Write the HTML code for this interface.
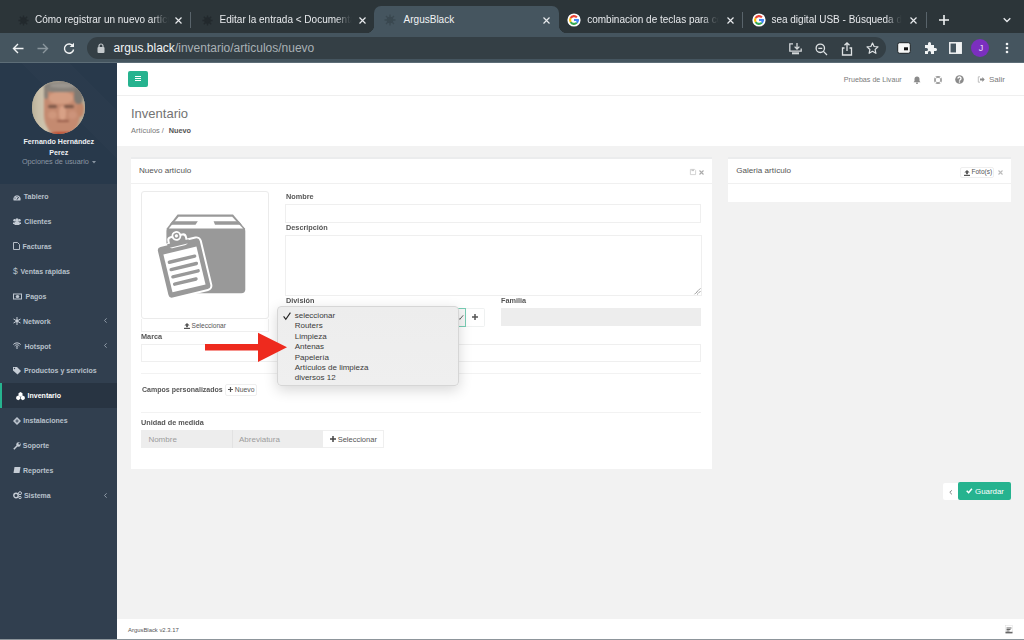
<!DOCTYPE html>
<html><head><meta charset="utf-8">
<style>
*{margin:0;padding:0;box-sizing:border-box}
html,body{width:1024px;height:640px;overflow:hidden;background:#f2f2f2;font-family:"Liberation Sans",sans-serif;position:relative}
.a{position:absolute}
.t{position:absolute;white-space:nowrap;line-height:1}
.b{font-weight:bold}
.lab .t{transform:scaleX(.936);transform-origin:0 0}
svg{position:absolute;overflow:visible}
</style></head><body>

<!-- ===== Chrome tab strip ===== -->
<div class="a" style="left:0;top:0;width:1024px;height:33px;background:#2c3539"></div>
<div class="a" style="left:374px;top:6px;width:185px;height:28px;background:#45555f;border-radius:7px 7px 0 0"></div>
<div class="a" style="left:366px;top:25px;width:8px;height:8px;background:radial-gradient(circle at 0 0,#2c3539 8px,#45555f 8.5px)"></div>
<div class="a" style="left:559px;top:25px;width:8px;height:8px;background:radial-gradient(circle at 100% 0,#2c3539 8px,#45555f 8.5px)"></div>
<!-- separators -->
<div class="a" style="left:190px;top:12px;width:1px;height:16px;background:#59646b"></div>
<div class="a" style="left:742px;top:12px;width:1px;height:16px;background:#59646b"></div>
<div class="a" style="left:926px;top:12px;width:1px;height:16px;background:#59646b"></div>
<!-- favicons (argus) -->
<svg style="left:17.5px;top:14.5px" width="11" height="11" viewBox="0 0 12 12"><g fill="#22292d"><circle cx="6" cy="6" r="3.5"/><path d="M6 0.5v11M0.5 6h11M2 2l8 8M10 2l-8 8" stroke="#22292d" stroke-width="1.5"/></g></svg>
<svg style="left:201.5px;top:14.5px" width="11" height="11" viewBox="0 0 12 12"><g fill="#22292d"><circle cx="6" cy="6" r="3.5"/><path d="M6 0.5v11M0.5 6h11M2 2l8 8M10 2l-8 8" stroke="#22292d" stroke-width="1.5"/></g></svg>
<svg style="left:384px;top:14px" width="12" height="12" viewBox="0 0 12 12"><g fill="#3a4850"><circle cx="6" cy="6" r="3.3"/><path d="M6 0.5v11M0.5 6h11M2 2l8 8M10 2l-8 8" stroke="#3a4850" stroke-width="1.3"/></g></svg>
<!-- google G -->
<svg style="left:567px;top:13px" width="14" height="14" viewBox="0 0 14 14"><circle cx="7" cy="7" r="6.6" fill="#fff"/><g fill="none" stroke-width="2.1"><path d="M10.900 7.000A3.9 3.9 0 0 1 9.758 9.758" stroke="#4285f4"/><path d="M9.758 9.758A3.9 3.9 0 0 1 3.623 8.950" stroke="#34a853"/><path d="M3.623 8.950A3.9 3.9 0 0 1 3.623 5.050" stroke="#fbbc05"/><path d="M3.623 5.050A3.9 3.9 0 0 1 9.898 4.390" stroke="#ea4335"/><path d="M7 7H11.9" stroke="#4285f4"/></g></svg>
<svg style="left:752px;top:13px" width="14" height="14" viewBox="0 0 14 14"><circle cx="7" cy="7" r="6.6" fill="#fff"/><g fill="none" stroke-width="2.1"><path d="M10.900 7.000A3.9 3.9 0 0 1 9.758 9.758" stroke="#4285f4"/><path d="M9.758 9.758A3.9 3.9 0 0 1 3.623 8.950" stroke="#34a853"/><path d="M3.623 8.950A3.9 3.9 0 0 1 3.623 5.050" stroke="#fbbc05"/><path d="M3.623 5.050A3.9 3.9 0 0 1 9.898 4.390" stroke="#ea4335"/><path d="M7 7H11.9" stroke="#4285f4"/></g></svg>
<!-- tab titles -->
<div class="t" style="left:35px;top:14.9px;font-size:10px;color:#e8eaed;width:134px;overflow:hidden;-webkit-mask-image:linear-gradient(90deg,#000 calc(100% - 16px),rgba(0,0,0,.25) calc(100% - 6px),transparent 100%)">Cómo registrar un nuevo artículo</div>
<div class="t" style="left:219.6px;top:14.9px;font-size:10px;color:#e8eaed;width:132px;overflow:hidden;-webkit-mask-image:linear-gradient(90deg,#000 calc(100% - 16px),rgba(0,0,0,.25) calc(100% - 6px),transparent 100%)">Editar la entrada &lt; Documentación</div>
<div class="t" style="left:403.6px;top:14.9px;font-size:10px;color:#f1f3f4">ArgusBlack</div>
<div class="t" style="left:587.2px;top:14.9px;font-size:10px;color:#e8eaed;width:132px;overflow:hidden;-webkit-mask-image:linear-gradient(90deg,#000 calc(100% - 16px),rgba(0,0,0,.25) calc(100% - 6px),transparent 100%)">combinacion de teclas para copiar</div>
<div class="t" style="left:771.4px;top:14.9px;font-size:10px;color:#e8eaed;width:131px;overflow:hidden;-webkit-mask-image:linear-gradient(90deg,#000 calc(100% - 16px),rgba(0,0,0,.25) calc(100% - 6px),transparent 100%)">sea digital USB - Búsqueda de Google</div>
<!-- close X -->
<svg style="left:175px;top:17px" width="7" height="7" viewBox="0 0 7 7"><path d="M0.5 .5l6 6M6.5 .5l-6 6" stroke="#e8eaed" stroke-width="1.2"/></svg>
<svg style="left:359px;top:17px" width="7" height="7" viewBox="0 0 7 7"><path d="M0.5 .5l6 6M6.5 .5l-6 6" stroke="#e8eaed" stroke-width="1.2"/></svg>
<svg style="left:543px;top:17px" width="7" height="7" viewBox="0 0 7 7"><path d="M0.5 .5l6 6M6.5 .5l-6 6" stroke="#e8eaed" stroke-width="1.2"/></svg>
<svg style="left:727px;top:17px" width="7" height="7" viewBox="0 0 7 7"><path d="M0.5 .5l6 6M6.5 .5l-6 6" stroke="#e8eaed" stroke-width="1.2"/></svg>
<svg style="left:910px;top:17px" width="7" height="7" viewBox="0 0 7 7"><path d="M0.5 .5l6 6M6.5 .5l-6 6" stroke="#e8eaed" stroke-width="1.2"/></svg>
<!-- new tab + -->
<svg style="left:939px;top:15px" width="10" height="10" viewBox="0 0 10 10"><path d="M5 0v10M0 5h10" stroke="#f1f3f4" stroke-width="1.6"/></svg>
<svg style="left:1003px;top:17px" width="8" height="6" viewBox="0 0 8 6"><path d="M.7 1.2L4 4.5 7.3 1.2" fill="none" stroke="#e8eaed" stroke-width="1.3"/></svg>

<!-- ===== toolbar ===== -->
<div class="a" style="left:0;top:33px;width:1024px;height:30px;background:#45555f"></div>
<div class="a" style="left:0;top:62px;width:1024px;height:1px;background:#5d6d77"></div>
<div class="a" style="left:87px;top:37px;width:799px;height:22px;background:#343f45;border-radius:11px"></div>
<!-- back / fwd / reload -->
<svg style="left:12px;top:42.5px" width="12" height="11" viewBox="0 0 12 11"><path d="M11.5 5.5H1.5M6 1L1.5 5.5 6 10" fill="none" stroke="#f1f3f4" stroke-width="1.4"/></svg>
<svg style="left:37px;top:42.5px" width="12" height="11" viewBox="0 0 12 11"><path d="M.5 5.5h10M6 1l4.5 4.5L6 10" fill="none" stroke="#8a969d" stroke-width="1.4"/></svg>
<svg style="left:63px;top:42px" width="12" height="12" viewBox="0 0 12 12"><path d="M10 4.2A4.6 4.6 0 1 0 10.6 7.5" fill="none" stroke="#f1f3f4" stroke-width="1.4"/><path d="M11 0.8v4.3H6.7z" fill="#f1f3f4"/></svg>
<!-- lock -->
<svg style="left:97px;top:43px" width="8" height="10" viewBox="0 0 8 10"><rect x="0.5" y="4" width="7" height="6" rx="1" fill="#c4c9cc"/><path d="M2 4.5V3a2 2 0 0 1 4 0v1.5" fill="none" stroke="#c4c9cc" stroke-width="1.2"/></svg>
<div class="t" style="left:113.5px;top:42.4px;font-size:12px;color:#f1f3f4">argus.black<span style="color:#a9b1b6">/inventario/articulos/nuevo</span></div>
<!-- omnibox right icons -->
<svg style="left:788.5px;top:42.5px" width="13" height="12" viewBox="0 0 13 12"><path d="M4 .8H.8v7.4h11.4V5.5" fill="none" stroke="#d5d9db" stroke-width="1.3"/><path d="M8 0v5.8M5.6 3.6L8 6l2.4-2.4" fill="none" stroke="#d5d9db" stroke-width="1.3"/><rect x="3" y="9.3" width="7" height="2" fill="#d5d9db"/></svg>
<svg style="left:815px;top:42.5px" width="13" height="13" viewBox="0 0 13 13"><circle cx="5.3" cy="5.3" r="4.2" fill="none" stroke="#dfe3e5" stroke-width="1.3"/><path d="M8.4 8.4L12 12M3.3 5.3h4" stroke="#dfe3e5" stroke-width="1.3"/></svg>
<svg style="left:840.5px;top:41.5px" width="12" height="14" viewBox="0 0 12 14"><path d="M3.5 6H1.5v7h9V6H8.5" fill="none" stroke="#dfe3e5" stroke-width="1.3"/><path d="M6 9V1M3.5 3.3L6 .8l2.5 2.5" fill="none" stroke="#dfe3e5" stroke-width="1.3"/></svg>
<svg style="left:865.5px;top:41.5px" width="13" height="13" viewBox="0 0 13 13"><path d="M6.5 1l1.6 3.5 3.9.4-2.9 2.6.8 3.8-3.4-2-3.4 2 .8-3.8L1 4.9l3.9-.4z" fill="none" stroke="#dfe3e5" stroke-width="1.2" stroke-linejoin="round"/></svg>
<!-- right toolbar icons -->
<svg style="left:897px;top:42px" width="14" height="12" viewBox="0 0 14 12"><rect x="0.7" y="0.7" width="12.6" height="10.6" rx="2" fill="#f6f7f7" stroke="#1e2427" stroke-width="1"/><rect x="2" y="2" width="10" height="8" fill="#f6f7f7"/><rect x="7" y="5.3" width="4" height="3" fill="#111"/></svg>
<svg style="left:923px;top:41px" width="14" height="14" viewBox="0 0 14 14"><path d="M2 4h3V2.5a1.5 1.5 0 0 1 3 0V4h3v3h1.5a1.5 1.5 0 0 1 0 3H11v3H8v-1.5a1.5 1.5 0 0 0-3 0V13H2V10h1.5a1.5 1.5 0 0 0 0-3H2z" fill="#f1f3f4"/></svg>
<svg style="left:949px;top:42px" width="13" height="12" viewBox="0 0 13 12"><rect x="0.8" y="0.8" width="11.4" height="10.4" fill="none" stroke="#f1f3f4" stroke-width="1.5"/><rect x="7" y="1" width="5" height="10" fill="#f1f3f4"/></svg>
<div class="a" style="left:971px;top:39px;width:18px;height:18px;border-radius:50%;background:#7b2fbf"></div>
<div class="t" style="left:972px;top:43.5px;width:18px;text-align:center;font-size:9px;color:#e9dcf5">J</div>
<svg style="left:1004.5px;top:42px" width="4" height="12" viewBox="0 0 4 12"><circle cx="2" cy="2" r="1.3" fill="#f1f3f4"/><circle cx="2" cy="6" r="1.3" fill="#f1f3f4"/><circle cx="2" cy="10" r="1.3" fill="#f1f3f4"/></svg>
<!-- ===== sidebar ===== -->
<div class="a" style="left:0;top:63px;width:117px;height:577px;background:#313f4f"></div>
<div class="a" style="left:0;top:63px;width:117px;height:121px;background:#28394b"></div>
<div class="a" style="left:0;top:63px;width:117px;height:121px;background:linear-gradient(45deg,rgba(255,255,255,0) 60%,rgba(255,255,255,.012) 60%,rgba(255,255,255,.012) 80%,rgba(255,255,255,0) 80%)"></div>
<!-- avatar -->
<div class="a" style="left:31.7px;top:80.6px;width:53.6px;height:53.6px;border-radius:50%;overflow:hidden;background:#bfb49e">
 <div class="a" style="left:-4px;top:-4px;width:62px;height:62px;filter:blur(1.2px)">
  <div class="a" style="left:0;top:4px;width:20px;height:56px;background:linear-gradient(90deg,#b0a78f,#c9bfa9 50%,#cfc5af)"></div>
  <div class="a" style="left:48px;top:4px;width:14px;height:56px;background:#b8ad97"></div>
  <div class="a" style="left:16px;top:10px;width:36px;height:49px;border-radius:30% 36% 46% 44%;background:#c48a70"></div>
  <div class="a" style="left:21px;top:15px;width:24px;height:12px;border-radius:40%;background:#d39d82"></div>
  <div class="a" style="left:31px;top:29px;width:7px;height:14px;border-radius:40%;background:#d8a186"></div>
  <div class="a" style="left:20px;top:34px;width:9px;height:8px;border-radius:50%;background:#cf977c"></div>
  <div class="a" style="left:40px;top:34px;width:9px;height:8px;border-radius:50%;background:#cc937a"></div>
  <div class="a" style="left:49px;top:25px;width:7px;height:15px;border-radius:50%;background:#c18669"></div>
  <div class="a" style="left:16px;top:4px;width:40px;height:11px;border-radius:50% 50% 20% 20%;background:#87827b"></div>
  <div class="a" style="left:22px;top:6px;width:26px;height:5px;border-radius:50%;background:#9b968f"></div>
  <div class="a" style="left:46px;top:10px;width:9px;height:17px;border-radius:40%;background:#7f7a73"></div>
  <div class="a" style="left:16px;top:10px;width:4px;height:12px;border-radius:40%;background:#8a8178"></div>
  <div class="a" style="left:20px;top:28px;width:9px;height:3px;border-radius:2px;background:#7d5848"></div>
  <div class="a" style="left:36px;top:28px;width:10px;height:3px;border-radius:2px;background:#7d5848"></div>
  <div class="a" style="left:29px;top:43px;width:12px;height:2.2px;border-radius:2px;background:#9a604d"></div>
  <div class="a" style="left:22px;top:55px;width:27px;height:8px;border-radius:30% 30% 0 0;background:#bf4a2e"></div>
 </div>
</div>
<div class="t b" style="left:0;width:117.6px;text-align:center;top:139.2px;font-size:7.1px;color:#eef0f3">Fernando Hernández</div>
<div class="t b" style="left:0;width:117.6px;text-align:center;top:149.5px;font-size:7.1px;color:#eef0f3">Perez</div>
<div class="t" style="left:21.9px;top:158px;font-size:7.3px;color:#8a96a3">Opciones de usuario</div>
<svg style="left:91.5px;top:160.5px" width="4" height="3" viewBox="0 0 4 3"><path d="M0 0h4L2 2.4z" fill="#8a96a3"/></svg>

<!-- menu -->
<div class="a" style="left:0;top:383px;width:117px;height:25px;background:#283442"></div>
<div class="a" style="left:0;top:383px;width:2.2px;height:25px;background:#26b38f"></div>
<div style="color:#b8c1cb;font-size:7px;font-weight:bold">
<div class="t" style="left:23.8px;top:193.4px">Tablero</div>
<div class="t" style="left:24.2px;top:218.2px">Clientes</div>
<div class="t" style="left:22.5px;top:243.1px">Facturas</div>
<div class="t" style="left:13px;top:266.9px;font-weight:normal;font-size:8.5px">$</div><div class="t" style="left:20.5px;top:267.9px">Ventas rápidas</div>
<div class="t" style="left:25.5px;top:292.8px">Pagos</div>
<div class="t" style="left:23px;top:317.6px">Network</div>
<div class="t" style="left:24.5px;top:342.5px">Hotspot</div>
<div class="t" style="left:23.9px;top:367.3px">Productos y servicios</div>
<div class="t" style="left:27.6px;top:392.2px;color:#fff">Inventario</div>
<div class="t" style="left:23.3px;top:417px">Instalaciones</div>
<div class="t" style="left:22.8px;top:441.9px">Soporte</div>
<div class="t" style="left:23px;top:466.7px">Reportes</div>
<div class="t" style="left:23.9px;top:491.6px">Sistema</div>
</div>
<!-- menu icons -->
<svg style="left:12.8px;top:193.5px" width="8" height="7" viewBox="0 0 8 7"><path d="M.6 6.5A3.7 3.7 0 1 1 7.4 6.5z" fill="#bec6d0"/><path d="M4 5.6L5.6 3" stroke="#313f4f" stroke-width="1"/><circle cx="2" cy="4" r=".55" fill="#313f4f"/><circle cx="4" cy="2.2" r=".55" fill="#313f4f"/></svg>
<svg style="left:13px;top:217.5px" width="8" height="7" viewBox="0 0 8 7"><circle cx="4" cy="2" r="1.7" fill="#c5ccd5"/><circle cx="1.5" cy="2.3" r="1.2" fill="#c5ccd5"/><circle cx="6.5" cy="2.3" r="1.2" fill="#c5ccd5"/><path d="M1.5 7V5a2.5 2 0 0 1 5 0v2z M0 6V4.5h2V6z M6 6V4.5h2V6z" fill="#c5ccd5"/></svg>
<svg style="left:13px;top:242px" width="7" height="8" viewBox="0 0 7 8"><path d="M.5.5h4l2 2v5h-6z" fill="none" stroke="#c5ccd5" stroke-width=".9"/></svg>
<svg style="left:13px;top:293px" width="9" height="7" viewBox="0 0 9 7"><rect x="0" y=".5" width="9" height="6" fill="#bec6d0"/><rect x="1" y="1.5" width="7" height="4" fill="#313f4f"/><ellipse cx="4.5" cy="3.5" rx="1.8" ry="1.6" fill="#bec6d0"/></svg>
<svg style="left:13px;top:317px" width="8" height="8" viewBox="0 0 8 8"><path d="M4 0v8M.5 2l7 4M.5 6l7-4" stroke="#c5ccd5" stroke-width="1"/><circle cx="4" cy="4" r="1.4" fill="#c5ccd5"/></svg>
<svg style="left:13px;top:342px" width="8" height="7" viewBox="0 0 8 7"><path d="M.3 2.5a5 5 0 0 1 7.4 0M1.6 3.9a3.2 3.2 0 0 1 4.8 0M2.9 5.2a1.5 1.5 0 0 1 2.2 0" fill="none" stroke="#c5ccd5" stroke-width="1"/><circle cx="4" cy="6.3" r=".7" fill="#c5ccd5"/></svg>
<svg style="left:13px;top:367px" width="9" height="8" viewBox="0 0 9 8"><path d="M0 0h4l4 4-3.5 3.5L0 3.5z" fill="#c5ccd5"/><circle cx="1.5" cy="1.5" r=".7" fill="#313f4f"/></svg>
<svg style="left:15.5px;top:391.5px" width="9" height="8" viewBox="0 0 9 8"><path d="M4.5 0l2 1.2v2.3l-2 1.2-2-1.2V1.2zM2.2 3.6l2 1.2v2.3l-2 1.2-2-1.2V4.8zM6.8 3.6l2 1.2v2.3l-2 1.2-2-1.2V4.8z" fill="#fff"/></svg>
<svg style="left:13px;top:417px" width="8" height="8" viewBox="0 0 8 8"><path d="M0 4L4 0l4 4-4 4z" fill="#bec6d0"/><path d="M2.3 4L4 2.3 5.7 4 4 5.7z" fill="#313f4f"/><path d="M3.2 4L4 3.2 4.8 4 4 4.8z" fill="#bec6d0"/></svg>
<svg style="left:13px;top:441.5px" width="8" height="8" viewBox="0 0 8 8"><path d="M.8 7.2L4.2 3.8" stroke="#c5ccd5" stroke-width="1.5"/><circle cx="5.5" cy="2.5" r="2.2" fill="#c5ccd5"/><circle cx="6.3" cy="1.7" r=".9" fill="#313f4f"/></svg>
<svg style="left:13px;top:466.5px" width="8" height="7" viewBox="0 0 8 7"><path d="M1.5 0h6l-1 6h-6z" fill="#c5ccd5"/></svg>
<svg style="left:13px;top:491px" width="9" height="8" viewBox="0 0 9 8"><circle cx="3" cy="4.5" r="2.2" fill="none" stroke="#c5ccd5" stroke-width="1.4"/><circle cx="7" cy="2.2" r="1.5" fill="none" stroke="#c5ccd5" stroke-width="1"/><circle cx="7" cy="6.5" r="1.2" fill="none" stroke="#c5ccd5" stroke-width="1"/></svg>
<!-- arrows -->
<svg style="left:104px;top:317.6px" width="3" height="5" viewBox="0 0 3 5"><path d="M2.6.3L.5 2.5l2.1 2.2" fill="none" stroke="#9aa5b1" stroke-width=".9"/></svg>
<svg style="left:104px;top:343.3px" width="3" height="5" viewBox="0 0 3 5"><path d="M2.6.3L.5 2.5l2.1 2.2" fill="none" stroke="#9aa5b1" stroke-width=".9"/></svg>
<svg style="left:104px;top:492.5px" width="3" height="5" viewBox="0 0 3 5"><path d="M2.6.3L.5 2.5l2.1 2.2" fill="none" stroke="#9aa5b1" stroke-width=".9"/></svg>

<!-- ===== header ===== -->
<div class="a" style="left:117px;top:63px;width:907px;height:83px;background:#fff"></div>
<div class="a" style="left:117px;top:95px;width:907px;height:1px;background:#efefef"></div>
<div class="a" style="left:128px;top:71px;width:20px;height:16px;background:#26b38f;border-radius:2px"></div>
<div class="a" style="left:135px;top:75.7px;width:6px;height:1.1px;background:#fff"></div>
<div class="a" style="left:135px;top:77.9px;width:6px;height:1.1px;background:#fff"></div>
<div class="a" style="left:135px;top:80.1px;width:6px;height:1.1px;background:#fff"></div>
<div class="t" style="left:843.8px;top:77px;font-size:7.15px;color:#7a7a7a">Pruebas de Livaur</div>
<svg style="left:912.5px;top:75.5px" width="8" height="8" viewBox="0 0 8 8"><path d="M4 .5a2.5 2.5 0 0 1 2.5 2.5v2l1 1.2H.5L1.5 5V3A2.5 2.5 0 0 1 4 .5z" fill="#8a8a8a"/><circle cx="4" cy="7.2" r=".9" fill="#8a8a8a"/></svg>
<svg style="left:933.5px;top:75.5px" width="8" height="8" viewBox="0 0 8 8"><circle cx="4" cy="4" r="3.1" fill="none" stroke="#999" stroke-width="1.6"/><path d="M2.44 2.44L1.03 1.03M5.56 2.44L6.97 1.03M2.44 5.56L1.03 6.97M5.56 5.56L6.97 6.97" stroke="#fff" stroke-width="1.1"/></svg>
<svg style="left:955px;top:75.2px" width="9" height="9" viewBox="0 0 9 9"><circle cx="4.5" cy="4.5" r="4.3" fill="#8a8a8a"/><path d="M3 3.5a1.5 1.5 0 1 1 2.1 1.3c-.5.3-.6.5-.6 1" fill="none" stroke="#fff" stroke-width="1.4"/><circle cx="4.5" cy="7" r=".75" fill="#fff"/></svg>
<svg style="left:977px;top:76px" width="8" height="7" viewBox="0 0 8 7"><path d="M3 .8H1.3v5.4H3" fill="none" stroke="#b0b0b0" stroke-width=".8"/><path d="M3 2.6h2.4V1.1l2.3 2.4-2.3 2.4V4.4H3z" fill="#8a8a8a"/></svg>
<div class="t" style="left:989px;top:75.6px;font-size:8px;color:#7a7a7a">Salir</div>

<div class="t" style="left:131px;top:107.4px;font-size:13px;color:#737373">Inventario</div>
<div class="t" style="left:131px;top:127px;font-size:7.4px;color:#777">Artículos /</div>
<div class="t b" style="left:168.75px;top:127px;font-size:7.3px;color:#555">Nuevo</div>

<!-- ===== panel 1 ===== -->
<div class="a" style="left:130.7px;top:157px;width:581.3px;height:312px;background:#fff;border-top:2px solid #ebeced"></div>
<div class="a" style="left:130.5px;top:183px;width:581.5px;height:1px;background:#f0f0f0"></div>
<div class="t" style="left:139px;top:166.5px;font-size:8.1px;color:#555">Nuevo artículo</div>
<svg style="left:690px;top:169px" width="6" height="6" viewBox="0 0 6 6"><path d="M.4.4h4.2l1 1v4.2H.4z" fill="none" stroke="#c8c8c8" stroke-width=".8"/><rect x="1.5" y=".5" width="2.5" height="1.6" fill="#c8c8c8"/></svg>
<svg style="left:699px;top:170px" width="5" height="5" viewBox="0 0 5 5"><path d="M.5.5l4 4M4.5.5l-4 4" stroke="#aaa" stroke-width="1.1"/></svg>

<!-- image box -->
<div class="a" style="left:141px;top:191px;width:128px;height:128px;border:1px solid #ebebeb;border-radius:3px"></div>
<svg style="left:150px;top:205px" width="105" height="100" viewBox="0 0 105 100">
  <path d="M27.6 9.6H83L95.3 24H16.4z" fill="#999"/>
  <rect x="16.4" y="22" width="78.9" height="66.3" rx="4" fill="#999"/>
  <path d="M28.6 11.8H82.2L93 23.6H18.8z" fill="#fff"/>
  <path d="M22.3 16.2H47.8L45.5 19.7H19.6z" fill="#999"/>
  <path d="M63.6 16.2H88.8L91.8 19.7H65z" fill="#999"/>
  <g transform="rotate(-13.5 34 62.5)">
    <rect x="11.5" y="36" width="45" height="54" rx="4.5" fill="#999" stroke="#fff" stroke-width="2"/>
    <rect x="17" y="45" width="34" height="39" fill="#fff"/>
    <path d="M21 54h26M21 61.5h26M21 69h26M21 76.5h22" stroke="#999" stroke-width="3.4" stroke-linecap="round"/>
    <rect x="25" y="30" width="18" height="10" rx="3" fill="#999" stroke="#fff" stroke-width="2"/>
    <circle cx="34" cy="30" r="4" fill="#999" stroke="#fff" stroke-width="1.8"/>
    <circle cx="34" cy="30" r="1.6" fill="#fff"/>
    <rect x="23" y="36" width="22" height="4" fill="#999"/>
  </g>
</svg>
<div class="a" style="left:141px;top:319px;width:128px;height:12.8px;border:1px solid #efefef;border-top:none"></div>
<svg style="left:183.5px;top:322.5px" width="6" height="6" viewBox="0 0 6 6"><path d="M3 0L5.6 2.6H3.9V4.3H2.1V2.6H.4z" fill="#555"/><rect x="0" y="4.8" width="6" height="1.2" fill="#555"/></svg>
<div class="t" style="left:191.5px;top:322.5px;font-size:6.6px;color:#555">Seleccionar</div>

<!-- labels -->
<div class="lab" style="color:#555;font-weight:bold;font-size:7.8px">
<div class="t" style="left:285.8px;top:193px">Nombre</div>
<div class="t" style="left:285.8px;top:223.8px">Descripción</div>
<div class="t" style="left:285.8px;top:296.8px">División</div>
<div class="t" style="left:501.4px;top:296.8px">Familia</div>
<div class="t" style="left:141px;top:332.8px">Marca</div>
<div class="t" style="left:141.5px;top:386.4px;font-size:7.5px">Campos personalizados</div>
<div class="t" style="left:141.3px;top:419.1px">Unidad de medida</div>
</div>
<!-- inputs -->
<div class="a" style="left:285px;top:204px;width:416px;height:18.5px;border:1px solid #efefef"></div>
<div class="a" style="left:285px;top:234.5px;width:417px;height:61.3px;border:1px solid #efefef"></div>
<svg style="left:693.5px;top:288px" width="7" height="7" viewBox="0 0 7 7"><path d="M6.2 .6L.6 6.2M6.2 3.4L3.4 6.2" stroke="#555" stroke-width=".9" stroke-dasharray="1 .5"/></svg>
<div class="a" style="left:285px;top:308px;width:181px;height:19px;border:1px solid #78cdb4;background:#f7f7f7"></div>
<svg style="left:458px;top:314.8px" width="6" height="5" viewBox="0 0 6 5"><path d="M.3 2.8l1.5 1.6L5.2.3" fill="none" stroke="#666" stroke-width="1"/></svg>
<div class="a" style="left:466px;top:308px;width:18.5px;height:19px;border:1px solid #eff1f1;border-left:none;border-radius:0 2px 2px 0"></div>
<svg style="left:472px;top:314px" width="6" height="6" viewBox="0 0 6 6"><path d="M3 0v6M0 3h6" stroke="#555" stroke-width="1.5"/></svg>
<div class="a" style="left:501px;top:308px;width:200px;height:18.3px;background:#ededed"></div>
<div class="a" style="left:141px;top:344px;width:560px;height:17.5px;border:1px solid #efefef"></div>
<div class="a" style="left:141px;top:373px;width:560px;height:1px;background:#f2f2f2"></div>
<div class="a" style="left:224.5px;top:384.4px;width:32px;height:11.3px;border:1px solid #efefef;border-radius:2px"></div>
<svg style="left:228px;top:387.3px" width="5" height="5" viewBox="0 0 5 5"><path d="M2.5 0v5M0 2.5h5" stroke="#555" stroke-width="1.2"/></svg>
<div class="t" style="left:234.8px;top:386.7px;font-size:6.8px;color:#555">Nuevo</div>
<div class="a" style="left:141px;top:412px;width:560px;height:1px;background:#f2f2f2"></div>
<div class="a" style="left:141px;top:430.2px;width:182px;height:18px;background:#ededed"></div>
<div class="a" style="left:231.8px;top:430.2px;width:1px;height:18px;background:#e2e2e2"></div>
<div class="t" style="left:148.4px;top:436.2px;font-size:8px;color:#9c9c9c">Nombre</div>
<div class="t" style="left:239px;top:436.2px;font-size:8px;color:#9c9c9c">Abreviatura</div>
<div class="a" style="left:323px;top:430.2px;width:60.5px;height:18px;border:1px solid #efefef;border-left:none"></div>
<svg style="left:330px;top:436px" width="6" height="6" viewBox="0 0 6 6"><path d="M3 0v6M0 3h6" stroke="#444" stroke-width="1.5"/></svg>
<div class="t" style="left:337.7px;top:435.6px;font-size:7.5px;color:#555">Seleccionar</div>

<!-- dropdown -->
<div class="a" style="left:277.3px;top:306.4px;width:181.3px;height:80px;border-radius:4px;background:linear-gradient(180deg,#ededed,#efefef);border:1px solid #d6d6d6;box-shadow:0 4px 14px rgba(0,0,0,.16)"></div>
<svg style="left:283px;top:312px" width="8" height="8" viewBox="0 0 8 8"><path d="M.6 4.3l2.2 3L7.4.6" fill="none" stroke="#222" stroke-width="1.1"/></svg>
<div style="color:#3a3a3a;font-size:8px">
<div class="t" style="left:294.7px;top:311.7px">seleccionar</div>
<div class="t" style="left:294.7px;top:322.15px">Routers</div>
<div class="t" style="left:294.7px;top:332.6px">Limpieza</div>
<div class="t" style="left:294.7px;top:343.05px">Antenas</div>
<div class="t" style="left:294.7px;top:353.5px">Papelería</div>
<div class="t" style="left:294.7px;top:363.95px">Artículos de limpieza</div>
<div class="t" style="left:294.7px;top:374.4px">diversos 12</div>
</div>

<!-- red arrow -->
<svg style="left:200px;top:330px" width="90" height="35" viewBox="200 330 90 35"><path d="M205 344h53v-11.3l29 14.6-29 14.6v-11.3H205z" fill="#ee2a1e"/></svg>

<!-- ===== panel 2 ===== -->
<div class="a" style="left:728px;top:157px;width:283px;height:45px;background:#fff;border-top:2px solid #ebeced"></div>
<div class="a" style="left:728px;top:183px;width:283px;height:1px;background:#f0f0f0"></div>
<div class="t" style="left:736.2px;top:166.7px;font-size:8.1px;color:#555">Galeria artículo</div>
<div class="a" style="left:960.4px;top:167px;width:33.6px;height:11.4px;border:1px solid #efefef;border-radius:2px"></div>
<svg style="left:963.5px;top:170px" width="6" height="6" viewBox="0 0 6 6"><path d="M3 0L5.6 2.6H3.9V4.3H2.1V2.6H.4z" fill="#555"/><rect x="0" y="4.8" width="6" height="1.2" fill="#555"/></svg>
<div class="t" style="left:971.5px;top:169.4px;font-size:6.5px;color:#555">Foto(s)</div>
<svg style="left:998px;top:170px" width="5" height="5" viewBox="0 0 5 5"><path d="M.5.5l4 4M4.5.5l-4 4" stroke="#bbb" stroke-width="1.1"/></svg>

<!-- ===== buttons ===== -->
<div class="a" style="left:942.6px;top:483px;width:16px;height:17.4px;background:#fff;border-radius:2px 0 0 2px"></div>
<svg style="left:948.8px;top:489.6px" width="4" height="5" viewBox="0 0 4 5"><path d="M2.9.3L.8 2.3l2.1 2" fill="none" stroke="#666" stroke-width=".8"/></svg>
<div class="a" style="left:958.3px;top:482.2px;width:52.7px;height:18.2px;background:#26b38f;border-radius:2px"></div>
<svg style="left:966px;top:488.3px" width="6.5" height="5.5" viewBox="0 0 6.5 5.5"><path d="M.7 2.8l1.9 1.9L5.9.7" fill="none" stroke="#fff" stroke-width="1.5"/></svg>
<div class="t" style="left:975px;top:488.3px;font-size:7.9px;color:#fff">Guardar</div>

<!-- ===== footer ===== -->
<div class="a" style="left:117px;top:619px;width:907px;height:20px;background:#fff"></div>
<div class="a" style="left:0;top:639px;width:1024px;height:1px;background:#8d959b"></div>
<div class="t" style="left:128px;top:627.5px;font-size:5.9px;color:#555">ArgusBlack v2.3.17</div>
<svg style="left:1004.5px;top:624.5px" width="8" height="9" viewBox="0 0 8 9"><rect x=".5" y=".5" width="7" height="7" fill="#fff" stroke="#ddd" stroke-width=".5"/><path d="M1.5 3h5M1.5 4.5h4M1.5 6h3" stroke="#555" stroke-width=".9"/><rect x=".5" y="6.8" width="7" height="1.6" fill="#666"/></svg>

</body></html>
